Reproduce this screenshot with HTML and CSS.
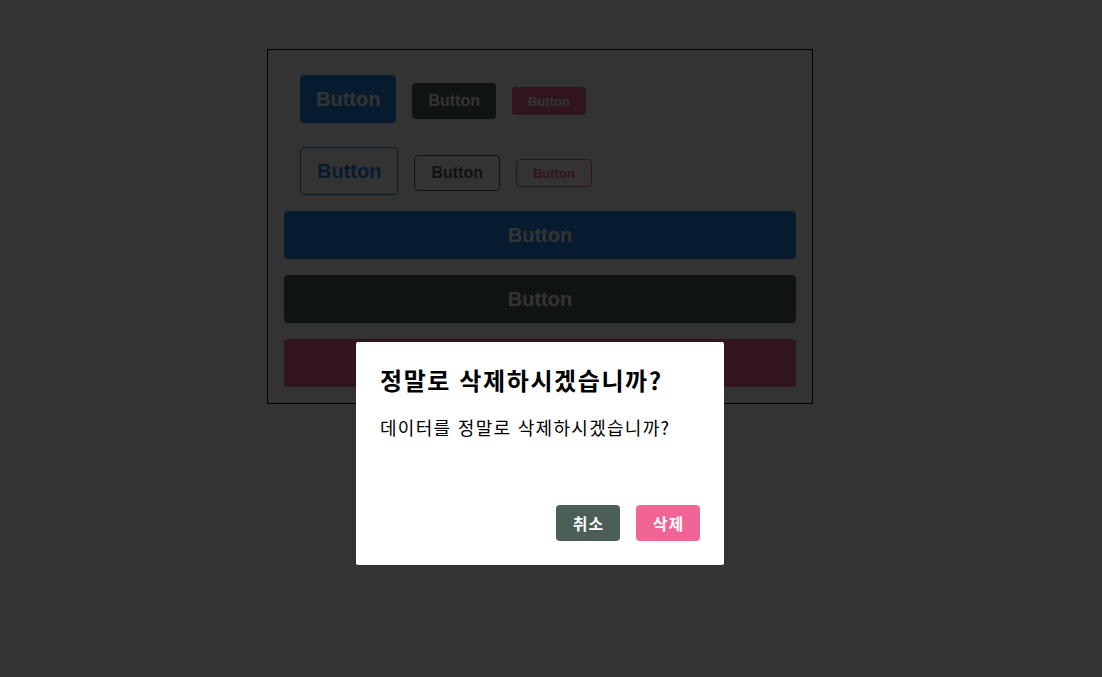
FILE: index.html
```html
<!DOCTYPE html>
<html lang="ko">
<head>
<meta charset="utf-8">
<title>Buttons</title>
<link rel="stylesheet" href="styles.css">
</head>
<body>
<div class="page">
  <div class="app">
    <div class="group group-first">
      <button class="btn large blue">Button</button>
      <button class="btn medium gray">Button</button>
      <button class="btn small pink">Button</button>
    </div>
    <div class="group group-second">
      <button class="btn large blue outline">Button</button>
      <button class="btn medium gray outline">Button</button>
      <button class="btn small pink outline">Button</button>
    </div>
    <div class="full-list">
      <button class="btn large blue full">Button</button>
      <button class="btn large gray full">Button</button>
      <button class="btn large pink full">Button</button>
    </div>
  </div>
</div>
<div class="overlay">
  <div class="dialog">
    <h3 class="dialog-title">정말로 삭제하시겠습니까?</h3>
    <p class="dialog-text">데이터를 정말로 삭제하시겠습니까?</p>
    <div class="dialog-actions">
      <button class="btn medium gray">취소</button>
      <button class="btn medium pink">삭제</button>
    </div>
  </div>
</div>
</body>
</html>
```
FILE: styles.css
```css
html, body {
  margin: 0;
  padding: 0;
  background: #ffffff;
}

body {
  font-family: "Liberation Sans", "Noto Sans CJK KR", sans-serif;
}

.page {
  width: 1080px;
  padding-top: 49px;
}

.app {
  width: 512px;
  margin: 0 auto;
  border: 1px solid #000000;
  padding: 16px;
}

.group {
  display: flex;
  align-items: baseline;
  gap: 16px;
  padding-left: 16px;
}

.group-first {
  margin-top: 9px;
}

.group-second {
  margin-top: 24px;
}

.full-list {
  display: flex;
  flex-direction: column;
  gap: 16px;
  margin-top: 16px;
}

.btn {
  display: inline-flex;
  align-items: center;
  justify-content: center;
  box-sizing: border-box;
  border: none;
  outline: none;
  border-radius: 4px;
  color: #ffffff;
  font-family: "Liberation Sans", "Noto Sans CJK KR", sans-serif;
  font-weight: bold;
  padding: 0 16px;
  margin: 0;
  cursor: pointer;
}

.large {
  height: 48px;
  font-size: 20px;
}

.medium {
  height: 36px;
  font-size: 16px;
}

.small {
  height: 28px;
  font-size: 13px;
}

.blue { background: #228be6; }
.gray { background: #4b5f57; }
.pink { background: #f06595; }

.outline {
  background: transparent;
  border: 1px solid currentColor;
}

.blue.outline { color: #228be6; }
.gray.outline { color: #4b5f57; }
.pink.outline { color: #f06595; }

.full {
  width: 100%;
}

.overlay {
  position: fixed;
  left: 0;
  top: 0;
  right: 0;
  bottom: 0;
  background: rgba(0, 0, 0, 0.8);
}

.dialog {
  position: absolute;
  left: 356px;
  top: 342px;
  width: 320px;
  padding: 24px;
  background: #ffffff;
  border-radius: 2px;
  font-family: "Noto Sans CJK KR", sans-serif;
}

.dialog-title {
  margin: 0;
  font-size: 24px;
  line-height: 1.2;
  font-weight: bold;
  letter-spacing: 1.6px;
  color: #000000;
}

.dialog-text {
  margin: 19px 0 0;
  font-size: 18px;
  line-height: 1.5;
  letter-spacing: 1.3px;
  color: #000000;
}

.dialog-actions {
  display: flex;
  justify-content: flex-end;
  gap: 16px;
  margin-top: 64px;
}

.dialog-actions .btn {
  font-family: "Noto Sans CJK KR", sans-serif;
  letter-spacing: 1px;
  padding: 0 15px 0 16px;
  width: 64px;
}
```
